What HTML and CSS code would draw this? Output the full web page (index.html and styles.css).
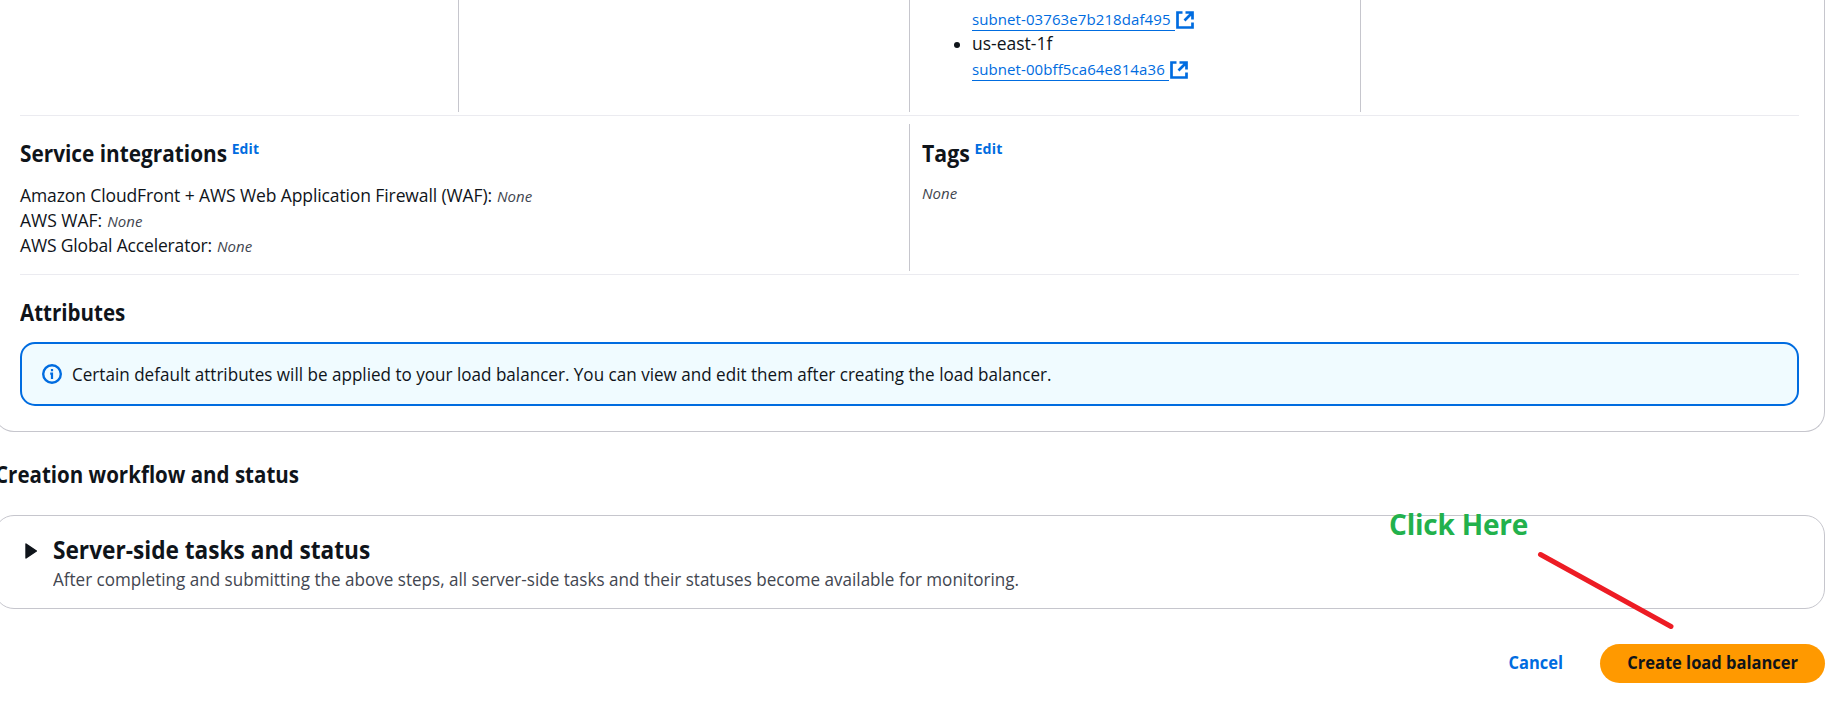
FILE: index.html
```html
<!DOCTYPE html>
<html lang="en">
<head>
<meta charset="utf-8">
<title>Create load balancer</title>
<link rel="stylesheet" href="styles.css">
</head>
<body>
<main class="page">
  <section class="card summary">
    <div class="row row-network">
      <div class="cell"></div>
      <div class="cell"></div>
      <div class="cell">
        <ul class="subnets">
          <li><span class="zone">us-east-1e</span>
            <a class="subnet"><span class="subnet-id">subnet-03763e7b218daf495</span><svg class="ext" viewBox="0 0 18 18"><path d="M6.5 1.5h-5v15h15V11.5M9.5 1.5h7V8.5M16 2 8.5 9.5"/></svg></a></li>
          <li><span class="zone">us-east-1f</span>
            <a class="subnet"><span class="subnet-id">subnet-00bff5ca64e814a36</span><svg class="ext" viewBox="0 0 18 18"><path d="M6.5 1.5h-5v15h15V11.5M9.5 1.5h7V8.5M16 2 8.5 9.5"/></svg></a></li>
        </ul>
      </div>
      <div class="cell"></div>
    </div>
    <div class="row row-services">
      <div class="cell">
        <h3 class="heading heading-services">Service integrations<a class="edit">Edit</a></h3>
        <div class="lines">
          <div><span class="label-cf">Amazon CloudFront + AWS Web Application Firewall (WAF):</span><em class="none">None</em></div>
          <div><span>AWS WAF:</span><em class="none">None</em></div>
          <div><span class="label-ga">AWS Global Accelerator:</span><em class="none">None</em></div>
        </div>
      </div>
      <div class="cell">
        <h3 class="heading heading-tags">Tags<a class="edit">Edit</a></h3>
        <div class="tags-value"><em class="none">None</em></div>
      </div>
    </div>
    <div class="attributes">
      <h3 class="heading">Attributes</h3>
      <div class="alert">
        <svg class="info" viewBox="0 0 20 20"><circle cx="10" cy="10" r="8.8"/><path d="M10 5v2.3M8.2 9.6H10V15M10 8.6V15"/></svg>
        <span class="alert-text">Certain default attributes will be applied to your load balancer. You can view and edit them after creating the load balancer.</span>
      </div>
    </div>
  </section>

  <h2 class="heading workflow">Creation workflow and status</h2>

  <section class="card tasks">
    <svg class="caret" viewBox="0 0 12 16"><path d="M1 1v14l10.4-7z"/></svg>
    <div>
      <h2 class="tasks-title">Server-side tasks and status</h2>
      <p class="tasks-desc">After completing and submitting the above steps, all server-side tasks and their statuses become available for monitoring.</p>
    </div>
  </section>

  <footer class="actions">
    <a class="cancel">Cancel</a>
    <button class="primary" type="button"><span class="primary-label">Create load balancer</span></button>
  </footer>

  <div class="note">Click Here</div>
  <svg class="pointer" viewBox="0 0 140 82"><path d="M4.5 4.5 135 76.5"/></svg>
</main>
</body>
</html>
```
FILE: styles.css
```css
* {
  box-sizing: border-box;
}

body {
  margin: 0;
  background: #fff;
  color: #0f141a;
  font-family: "Open Sans", "Noto Sans", sans-serif;
  font-size: 17.5px;
  line-height: 25px;
}

.page {
  position: relative;
  width: 1833px;
  height: 706px;
  overflow: hidden;
  padding: 0 8px 0 0;
}

.card {
  margin-left: -6px;
  border: 1px solid #c6c6cd;
  border-radius: 20px;
}

.summary {
  height: 432px;
  padding: 0 25px;
  border-top: 0;
  border-radius: 0 0 20px 20px;
}

.row {
  display: grid;
  border-bottom: 1px solid #ebebf0;
}

.row-network {
  grid-template-columns: 438px 451px 451px 439px;
  height: 116px;
  padding-bottom: 3px;
}

.row-services {
  grid-template-columns: 889px 890px;
  height: 159px;
  padding: 8px 0 3px;
}

.cell + .cell {
  padding-left: 12px;
  border-left: 1px solid #c6c6cd;
}

.row-services .cell {
  padding-top: 16px;
}

.subnets {
  margin: -19px 0 0;
  padding: 0 0 0 50px;
  list-style: none;
}

.subnets li {
  position: relative;
}

.subnets li::before {
  content: "";
  position: absolute;
  left: -18px;
  top: 11px;
  width: 6px;
  height: 6px;
  border-radius: 50%;
  background: #0f141a;
}

.zone {
  display: block;
}

.subnet {
  display: flex;
  height: 25px;
  color: #006ce0;
  font-size: 15px;
  letter-spacing: 0.09px;
}

.subnet-id {
  height: 25px;
  padding-right: 4px;
  border-bottom: 1px solid #006ce0;
  line-height: 27px;
}

.ext {
  width: 18px;
  height: 18px;
  margin: 5px 0 0 1px;
  fill: none;
  stroke: #006ce0;
  stroke-width: 2.7;
}

.heading {
  margin: 0;
  font-size: 22.5px;
  font-weight: 700;
  line-height: 28px;
  transform: scaleX(0.912);
  transform-origin: 0 0;
}

.heading-services {
  transform: scaleX(0.924);
}

.heading-tags {
  transform: scaleX(0.945);
}

.edit {
  margin-left: 5px;
  color: #006ce0;
  font-size: 15px;
  letter-spacing: 0.2px;
  line-height: 0;
  vertical-align: 8px;
}

.lines {
  margin-top: 15px;
}

.label-cf {
  letter-spacing: -0.108px;
}

.label-ga {
  letter-spacing: -0.16px;
}

.none {
  color: #424650;
  font-size: 15px;
  font-style: italic;
  line-height: 0;
}

.lines .none {
  margin-left: 5px;
}

.tags-value {
  margin-top: 12px;
}

.attributes {
  padding-top: 24px;
}

.alert {
  display: flex;
  align-items: center;
  height: 64px;
  margin-top: 15px;
  padding: 0 20px;
  border: 2px solid #006ce0;
  border-radius: 15px;
  background: #f0fbff;
}

.alert-text {
  transform: scaleX(0.976);
  transform-origin: 0 0;
}

.info {
  width: 20px;
  height: 20px;
  margin-right: 10px;
  fill: none;
  stroke: #006ce0;
  stroke-width: 2.4;
}

.info path {
  stroke-width: 2.2;
}

.workflow {
  margin: 29px 0 26px -5px;
}

.tasks {
  display: flex;
  height: 94px;
  padding: 18px 25px 0 30px;
}

.caret {
  width: 12px;
  height: 16px;
  margin: 9px 16px 0 0;
  fill: #0f141a;
  stroke: #0f141a;
  stroke-width: 1.4;
  stroke-linejoin: round;
}

.tasks-title {
  margin: 0;
  font-size: 25px;
  font-weight: 700;
  line-height: 31px;
  transform: scaleX(0.906);
  transform-origin: 0 0;
}

.tasks-desc {
  margin: 2px 0 0;
  color: #424650;
  transform: scaleX(0.9755);
  transform-origin: 0 0;
}

.actions {
  display: flex;
  justify-content: flex-end;
  align-items: center;
  gap: 37px;
  margin-top: 35px;
}

.cancel {
  margin-top: -2px;
  color: #006ce0;
  font-weight: 700;
  transform: scaleX(0.94);
  transform-origin: 100% 0;
}

.primary {
  width: 225px;
  height: 39px;
  padding: 0 0 2px;
  border: 0;
  border-radius: 20px;
  background: #ff9900;
  color: #0f141a;
  font: inherit;
  font-weight: 700;
}

.primary-label {
  display: inline-block;
  transform: scaleX(0.943);
}

.note {
  position: absolute;
  left: 1389px;
  top: 504px;
  color: #22b14c;
  font-size: 28px;
  font-weight: 700;
  letter-spacing: -0.2px;
  line-height: 40px;
}

.pointer {
  position: absolute;
  left: 1536px;
  top: 550px;
  width: 140px;
  height: 82px;
  fill: none;
  stroke: #ed1c24;
  stroke-width: 5;
  stroke-linecap: round;
}
```
